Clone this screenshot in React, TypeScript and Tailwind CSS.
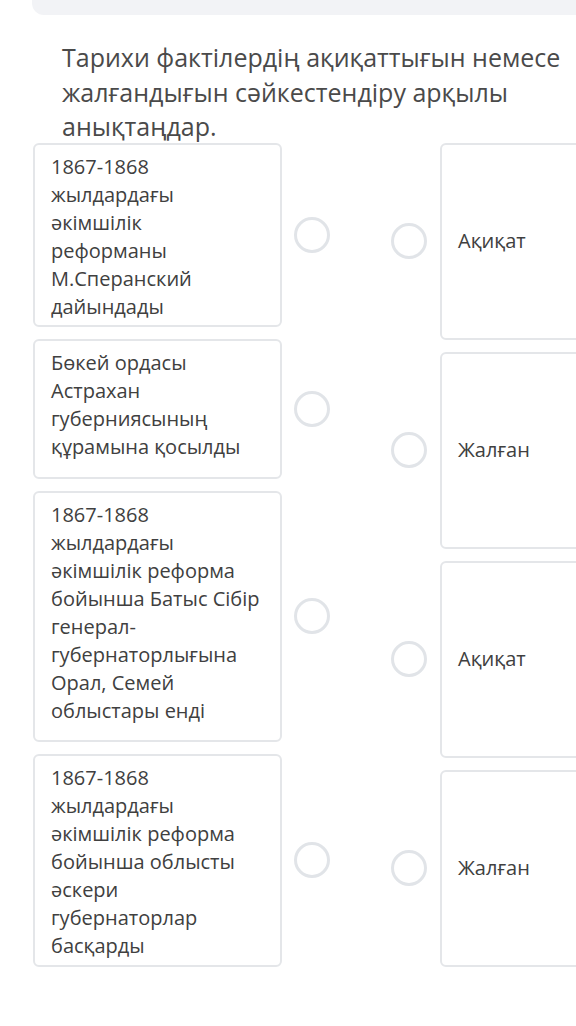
const leftItems = [
  {
    lines: ["1867-1868", "жылдардағы", "әкімшілік", "реформаны", "М.Сперанский", "дайындады"],
    h: "h-[184px]",
  },
  {
    lines: ["Бөкей ордасы", "Астрахан", "губерниясының", "құрамына қосылды"],
    h: "h-[140px]",
  },
  {
    lines: [
      "1867-1868",
      "жылдардағы",
      "әкімшілік реформа",
      "бойынша Батыс Сібір",
      "генерал-",
      "губернаторлығына",
      "Орал, Семей",
      "облыстары енді",
    ],
    h: "h-[251px]",
  },
  {
    lines: [
      "1867-1868",
      "жылдардағы",
      "әкімшілік реформа",
      "бойынша облысты",
      "әскери",
      "губернаторлар",
      "басқарды",
    ],
    h: "h-[213px]",
  },
];

const rightItems = ["Ақиқат", "Жалған", "Ақиқат", "Жалған"];

const Circle = () => (
  <div className="w-[36px] h-[36px] shrink-0 rounded-full border-[3px] border-[#e1e4e8] bg-white" />
);

const App = () => {
  return (
    <div
      className="w-[576px] min-h-[1026px] overflow-hidden bg-white text-[#404040]"
      style={{ fontFamily: '"Open Sans", "Noto Sans", sans-serif' }}
    >
      <div className="ml-[32px] h-[15px] w-[600px] rounded-bl-xl bg-[#f2f3f6]" />

      <h1 className="pl-[62px] pr-2 pt-[25px] text-[25px] leading-[34.5px] font-normal text-[#4a4a4a]">
        Тарихи фактілердің ақиқаттығын немесе жалғандығын сәйкестендіру арқылы анықтаңдар.
      </h1>

      <div className="flex pl-[33px] -mt-[1px]">
        <div className="flex flex-col gap-[12px] w-[296px] shrink-0">
          {leftItems.map((item, i) => (
            <div key={i} className="flex items-center gap-[12px]">
              <div
                className={`w-[249px] ${item.h} shrink-0 rounded-md border-2 border-[#e4e6e9] pl-[16px] pr-2 pt-[8px] text-[20px] leading-[28px] whitespace-nowrap`}
              >
                {item.lines.map((line, j) => (
                  <div key={j}>{line}</div>
                ))}
              </div>
              <Circle />
            </div>
          ))}
        </div>

        <div className="flex flex-col gap-[12px] ml-[62px]">
          {rightItems.map((label, i) => (
            <div key={i} className="flex items-center gap-[13px]">
              <Circle />
              <div className="w-[200px] h-[197px] shrink-0 flex items-center rounded-md border-2 border-[#e4e6e9] pl-[16px] text-[20px] leading-[28px]">
                {label}
              </div>
            </div>
          ))}
        </div>
      </div>
    </div>
  );
};

export default App;
